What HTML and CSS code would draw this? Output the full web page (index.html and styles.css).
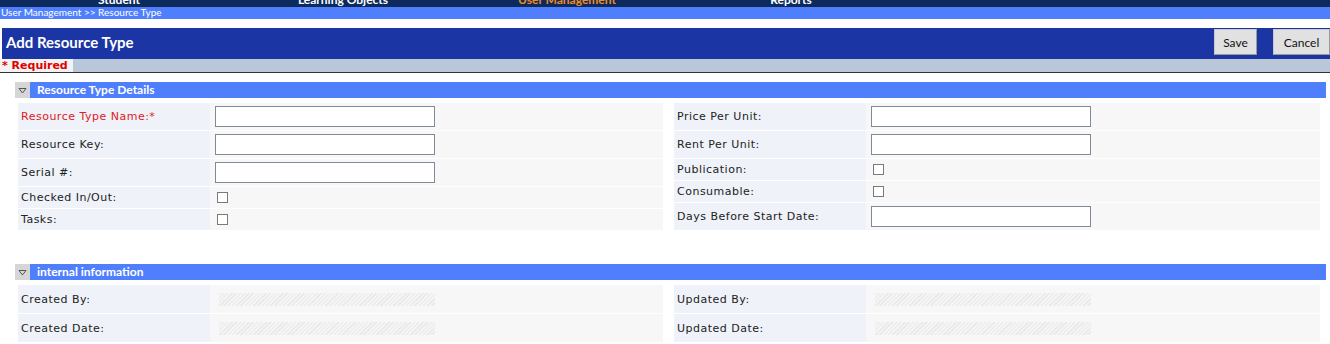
FILE: index.html
```html
<!DOCTYPE html>
<html>
<head>
<meta charset="utf-8">
<link rel="stylesheet" href="styles.css">
</head>
<body>
<div class="nav">
  <div class="nav-item">Student</div>
  <div class="nav-item">Learning Objects</div>
  <div class="nav-item active">User Management</div>
  <div class="nav-item">Reports</div>
</div>
<div class="crumb">User Management &gt;&gt; Resource Type</div>
<div class="header">
  <div class="title">Add Resource Type</div>
  <div class="buttons">
    <button class="btn btn-save">Save</button>
    <button class="btn btn-cancel">Cancel</button>
  </div>
</div>
<div class="reqbar"><span class="req">* Required</span></div>

<div class="section">
  <div class="sec-head"><span class="toggle"><svg width="9" height="7" viewBox="0 0 9 7"><path d="M1 1.5 H8 L4.5 6 Z" fill="none" stroke="#555" stroke-width="1"/></svg></span><span class="sec-title">Resource Type Details</span></div>
</div>
<div class="grid">
  <div class="col">
    <div class="row tall"><div class="lab red">Resource Type Name:*</div><div class="val"><span class="inp"></span></div></div>
    <div class="row tall"><div class="lab">Resource Key:</div><div class="val"><span class="inp"></span></div></div>
    <div class="row tall"><div class="lab">Serial #:</div><div class="val"><span class="inp"></span></div></div>
    <div class="row short"><div class="lab">Checked In/Out:</div><div class="val"><span class="chk"></span></div></div>
    <div class="row short"><div class="lab">Tasks:</div><div class="val"><span class="chk"></span></div></div>
  </div>
  <div class="col">
    <div class="row tall"><div class="lab">Price Per Unit:</div><div class="val"><span class="inp"></span></div></div>
    <div class="row tall"><div class="lab">Rent Per Unit:</div><div class="val"><span class="inp"></span></div></div>
    <div class="row short"><div class="lab">Publication:</div><div class="val"><span class="chk"></span></div></div>
    <div class="row short"><div class="lab">Consumable:</div><div class="val"><span class="chk"></span></div></div>
    <div class="row tall"><div class="lab">Days Before Start Date:</div><div class="val"><span class="inp"></span></div></div>
  </div>
</div>

<div class="section section2">
  <div class="sec-head"><span class="toggle"><svg width="9" height="7" viewBox="0 0 9 7"><path d="M1 1.5 H8 L4.5 6 Z" fill="none" stroke="#555" stroke-width="1"/></svg></span><span class="sec-title">internal information</span></div>
</div>
<div class="grid">
  <div class="col">
    <div class="row info"><div class="lab">Created By:</div><div class="val"><span class="dis"></span></div></div>
    <div class="row info"><div class="lab">Created Date:</div><div class="val"><span class="dis"></span></div></div>
  </div>
  <div class="col">
    <div class="row info"><div class="lab">Updated By:</div><div class="val"><span class="dis"></span></div></div>
    <div class="row info"><div class="lab">Updated Date:</div><div class="val"><span class="dis"></span></div></div>
  </div>
</div>
</body>
</html>
```

FILE: styles.css
```css
html, body {
  margin: 0;
  padding: 0;
  background: #ffffff;
  overflow: hidden;
}
body {
  width: 1330px;
  height: 344px;
  font-family: "DejaVu Sans", Verdana, sans-serif;
}
.nav {
  height: 7px;
  background: #0c2a5c;
  overflow: hidden;
  display: flex;
  padding-left: 7px;
}
.nav-item {
  width: 224px;
  text-align: center;
  font-family: Lato, "Liberation Sans", sans-serif;
  font-weight: bold;
  font-size: 12px;
  line-height: 12px;
  margin-top: -6px;
  color: #ffffff;
}
.nav-item.active {
  color: #f28a21;
}
.crumb {
  height: 12px;
  background: #4f7ffd;
  color: #ffffff;
  font-family: Lato, "Liberation Sans", sans-serif;
  font-size: 10px;
  line-height: 11px;
  padding-left: 1px;
}
.header {
  margin-top: 9px;
  margin-left: 2px;
  height: 31px;
  background: #1b36a4;
  display: flex;
  justify-content: space-between;
}
.title {
  font-family: Lato, "Liberation Sans", sans-serif;
  font-weight: bold;
  font-size: 15px;
  color: #ffffff;
  padding-left: 4px;
  line-height: 28px;
}
.buttons {
  display: flex;
  gap: 16px;
  padding-top: 1px;
}
.btn {
  height: 26px;
  background: #e1e1e1;
  border: 1px solid #c8c8c8;
  border-right-color: #9a9a9a;
  border-bottom-color: #9a9a9a;
  font-family: Lato, "Liberation Sans", sans-serif;
  font-size: 12px;
  color: #111111;
  padding: 0;
  margin: 0;
}
.btn-save { width: 43px; }
.btn-cancel { width: 57px; }
.reqbar {
  height: 13px;
  background: #b9c7d9;
  border-bottom: 1px solid #333333;
  display: flex;
}
.req {
  background: #f3f3f3;
  color: #e00000;
  font-family: "DejaVu Sans", Verdana, sans-serif;
  font-weight: bold;
  font-size: 11px;
  line-height: 13px;
  padding-left: 2px;
  width: 71px;
}
.section {
  margin-top: 9px;
  margin-left: 15px;
  margin-right: 4px;
}
.section2 {
  margin-top: 34px;
}
.sec-head {
  height: 16px;
  display: flex;
  background: #4f7ffd;
}
.toggle {
  width: 15px;
  background: #d6d6d6;
  display: flex;
  align-items: center;
  justify-content: center;
}
.sec-title {
  font-family: Lato, "Liberation Sans", sans-serif;
  font-weight: bold;
  font-size: 12px;
  color: #ffffff;
  line-height: 15px;
  padding-left: 7px;
}
.grid {
  display: grid;
  grid-template-columns: 645px 646px;
  column-gap: 11px;
  padding-left: 18px;
  margin-top: 5px;
}
.col {
  display: flex;
  flex-direction: column;
  gap: 1px;
}
.row {
  display: flex;
  background: #f7f7f7;
}
.row.tall { height: 27px; }
.row.short { height: 21px; }
.row.info { height: 28px; }
.lab {
  width: 192px;
  background: #eff2f8;
  font-size: 11px;
  letter-spacing: 0.5px;
  color: #222222;
  padding-left: 3px;
  display: flex;
  align-items: center;
  box-sizing: border-box;
}
.lab.red {
  color: #e0201c;
}
.val {
  flex: 1;
  display: flex;
  align-items: center;
  padding-left: 5px;
}
.inp {
  display: block;
  width: 220px;
  height: 21px;
  box-sizing: border-box;
  border: 1px solid #7f8b96;
  background: #ffffff;
}
.chk {
  display: block;
  width: 11px;
  height: 11px;
  box-sizing: border-box;
  border: 1px solid #7a7a7a;
  background: #ffffff;
  margin-left: 2px;
}
.dis {
  display: block;
  width: 216px;
  height: 13px;
  margin-left: 4px;
  background: repeating-linear-gradient(135deg, #e9e9e9 0, #e9e9e9 1px, #f4f4f4 1px, #f4f4f4 3px);
}
```
